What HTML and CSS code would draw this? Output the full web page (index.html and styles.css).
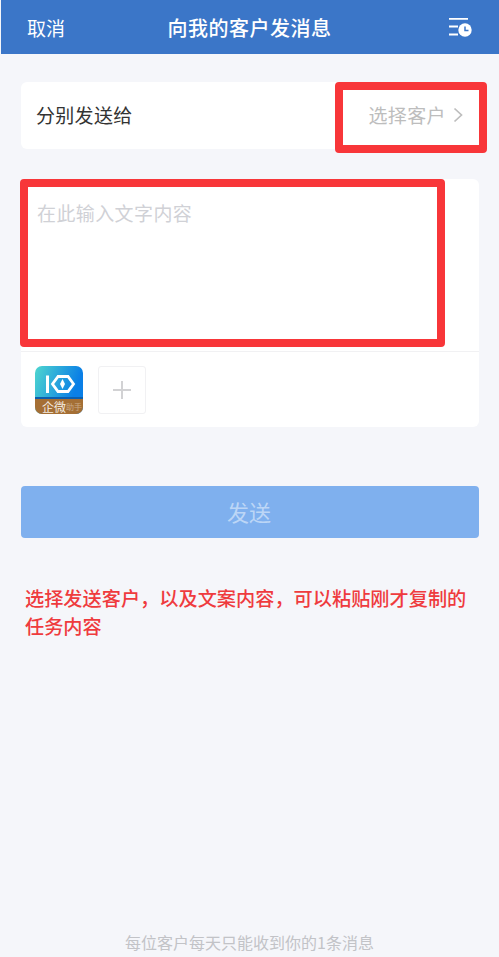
FILE: index.html
```html
<!DOCTYPE html>
<html lang="zh-CN">
<head>
    <meta charset="UTF-8">
    <meta name="viewport" content="width=device-width, initial-scale=1.0">
    <title>向我的客户发消息</title>
    <link rel="stylesheet" href="styles.css">
</head>
<body>
    <header class="topbar">
        <span class="topbar-cancel">取消</span>
        <span class="topbar-title">向我的客户发消息</span>
        <svg class="topbar-icon" width="24" height="24" viewBox="0 0 24 24">
            <path d="M1 2.8H20M1 10.5H10M1 18.5H10" stroke="#fff" stroke-width="1.8" fill="none"/>
            <circle cx="17" cy="14" r="6.7" fill="#fff"/>
            <path d="M17 10.5V14.5H20.5" stroke="#3b76c8" stroke-width="1.5" fill="none"/>
        </svg>
    </header>

    <main class="content">
        <section class="card recipient-row">
            <span class="recipient-label">分别发送给</span>
            <span class="recipient-pick">选择客户
                <svg class="chevron" width="10" height="16" viewBox="0 0 10 16">
                    <path d="M1.5 1.5L8.5 8L1.5 14.5" stroke="#bdbdbd" stroke-width="1.7" fill="none"/>
                </svg>
            </span>
            <div class="highlight highlight-pick"></div>
        </section>

        <section class="card message-card">
            <div class="message-input">在此输入文字内容</div>
            <div class="attachments">
                <div class="app-logo">
                    <svg class="app-logo-mark" width="48" height="33" viewBox="0 0 48 33">
                        <path d="M12.5 9.5V27" stroke="#fff" stroke-width="3" fill="none"/>
                        <path d="M23 10.5L17.5 18L23 25.5H33L38.5 18L33 10.5Z" fill="none" stroke="#fff" stroke-width="2.8"/>
                        <path d="M27.5 13L25 18L27.5 23L30 18Z" fill="#fff"/>
                    </svg>
                    <div class="app-logo-band"><b>企微</b><i>助手</i></div>
                </div>
                <div class="add-tile">
                    <svg width="18" height="18" viewBox="0 0 18 18">
                        <path d="M9 0V18M0 9H18" stroke="#d2d2d4" stroke-width="2" fill="none"/>
                    </svg>
                </div>
            </div>
            <div class="highlight highlight-input"></div>
        </section>

        <button class="send-btn">发送</button>

        <p class="tip">选择发送客户，以及文案内容，可以粘贴刚才复制的任务内容</p>
    </main>

    <footer class="limit-note">每位客户每天只能收到你的1条消息</footer>
</body>
</html>
```

FILE: styles.css
```css
html, body {
    margin: 0;
    padding: 0;
}

body {
    height: 957px;
    overflow: hidden;
    display: flex;
    flex-direction: column;
    background: #f5f6fa;
    font-family: "Noto Sans CJK SC", "Liberation Sans", sans-serif;
}

.topbar {
    height: 54px;
    margin-left: 1px;
    padding: 0 27px 0 26px;
    display: grid;
    grid-template-columns: 1fr auto 1fr;
    align-items: center;
    background: #3b76c8;
    color: #fff;
}

.topbar-cancel {
    font-size: 19px;
}

.topbar-title {
    font-size: 20px;
    font-weight: 500;
    letter-spacing: 0.5px;
}

.topbar-icon {
    margin-top: 1px;
    justify-self: end;
}

.content {
    flex: 1;
    padding: 28px 20px 0 21px;
}

.card {
    position: relative;
    background: #fff;
    border-radius: 6px;
}

.recipient-row {
    height: 67px;
    padding: 0 16px 2px 15px;
    box-sizing: border-box;
    display: flex;
    align-items: center;
    justify-content: space-between;
    font-size: 19px;
}

.recipient-label {
    color: #333;
    letter-spacing: 0.3px;
}

.recipient-pick {
    display: flex;
    align-items: center;
    gap: 7px;
    color: #bdbdbd;
    letter-spacing: 0.4px;
}

.highlight {
    position: absolute;
    box-sizing: border-box;
    border: 8px solid #f83639;
    border-radius: 4px;
}

.highlight-pick {
    top: 0;
    left: 314px;
    width: 152px;
    height: 71px;
}

.highlight-input {
    top: 0;
    left: -1px;
    width: 425px;
    height: 168px;
}

.message-card {
    margin-top: 30px;
    height: 248px;
    display: flex;
    flex-direction: column;
}

.message-input {
    height: 173px;
    flex: none;
    box-sizing: border-box;
    padding: 20px 16px 0;
    font-size: 19px;
    letter-spacing: 0.4px;
    line-height: 28px;
    color: #d0d1d6;
    border-bottom: 1px solid #f1f1f3;
}

.attachments {
    padding: 14px 14px 0;
    display: flex;
    gap: 15px;
}

.app-logo {
    width: 48px;
    height: 48px;
    border-radius: 7px;
    overflow: hidden;
    background: linear-gradient(110deg, #4fd6cf, #0a7fe6 75%);
}

.app-logo-mark {
    display: block;
}

.app-logo-band {
    height: 15px;
    border-top: 2px solid #0b5fae;
    margin-top: -2px;
    background: #a56f35;
    display: flex;
    align-items: center;
    padding-left: 7px;
    font-size: 12px;
    line-height: 15px;
    color: #f3ece2;
    white-space: nowrap;
}

.app-logo-band b {
    font-weight: 400;
}

.app-logo-band i {
    font-style: normal;
    font-size: 8px;
    opacity: 0.45;
}

.add-tile {
    width: 48px;
    height: 48px;
    box-sizing: border-box;
    border: 1px solid #f1f1f3;
    border-radius: 3px;
    display: flex;
    align-items: center;
    justify-content: center;
}

.send-btn {
    display: block;
    width: 100%;
    height: 52px;
    margin-top: 59px;
    padding: 0 2px 3px 0;
    border: none;
    border-radius: 4px;
    background: #7fb0ee;
    color: #bcd6f6;
    font-family: inherit;
    font-size: 22px;
}

.tip {
    margin: 46px 0 0 4px;
    font-size: 19.2px;
    line-height: 28px;
    font-weight: 500;
    color: #ef3b3e;
}

.limit-note {
    height: 30px;
    text-align: center;
    font-size: 16px;
    line-height: 30px;
    color: #c2c3c7;
}
```
